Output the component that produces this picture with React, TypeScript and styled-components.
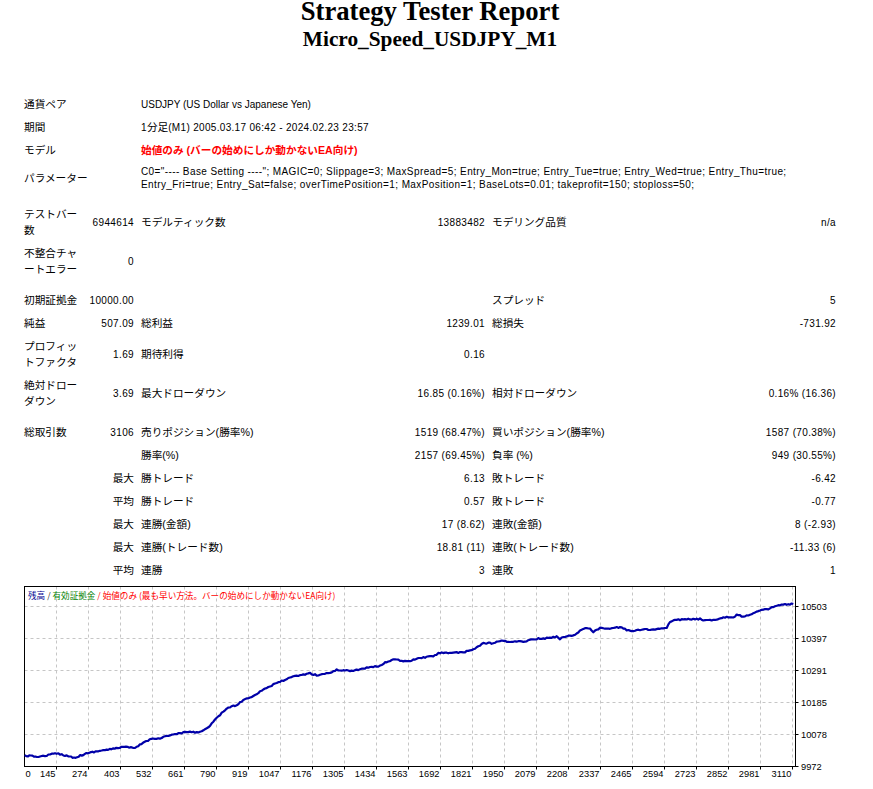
import React from "react";
import styled, { createGlobalStyle } from "styled-components";

const GlobalStyle = createGlobalStyle`
  html, body { margin: 0; padding: 0; background: #ffffff; }
  body { font-family: "Liberation Sans", "Noto Sans CJK JP", Arial, sans-serif; color: #000; }
`;

const Page = styled.div`
  width: 860px;
`;

const Title = styled.div`
  text-align: center;
  font-family: "Liberation Serif", "Times New Roman", serif;
  font-weight: 700;
  font-size: 26.67px;
  line-height: 22px;
`;

const SubTitle = styled.div`
  text-align: center;
  font-family: "Liberation Serif", "Times New Roman", serif;
  font-weight: 700;
  font-size: 21.33px;
  line-height: 34px;
  margin-bottom: 36px;
`;

const Report = styled.table`
  width: 820px;
  margin: 0 auto;
  table-layout: fixed;
  border-collapse: separate;
  border-spacing: 1px;
`;

const Cell = styled.td<{ $right?: boolean; $jp?: boolean; $red?: boolean; $ls?: number }>`
  padding: 3px;
  text-align: ${(p) => (p.$right ? "right" : "left")};
  vertical-align: middle;
  font-family: "Liberation Sans", "Noto Sans CJK JP", sans-serif;
  font-size: ${(p) => (p.$jp ? "10.67px" : "10px")};
  line-height: ${(p) => (p.$jp ? "16px" : "13px")};
  letter-spacing: ${(p) => (p.$ls !== undefined ? p.$ls : p.$right && !p.$jp ? 0.35 : 0)}px;
  font-weight: ${(p) => (p.$red ? 700 : 400)};
  color: ${(p) => (p.$red ? "#ff0000" : "#000000")};
  white-space: nowrap;
  overflow: hidden;
`;

const Jp = styled.span`
  font-family: "Noto Sans CJK JP", sans-serif;
  font-size: 10.67px;
  letter-spacing: 0;
`;

const SpacerRow = styled.tr`
  height: 7px;
  & > td { padding: 0; }
`;

const ChartBox = styled.div`
  width: 820px;
  height: 200px;
  margin: 1px auto 0;
  & > svg { display: block; }
`;

const KEY: [number, number][] = [
  [4.7, 172.7], [20, 173.7], [36.7, 170.3], [46.7, 172.7], [54, 174.7], [68, 170],
  [80, 167.7], [93, 166], [103, 163.7], [115, 165.3], [123, 159.7], [133, 155.3],
  [140, 155.3], [146.7, 153], [160, 150.3], [170, 148.7], [176.7, 149.7], [186.7, 145.7],
  [196.7, 135.3], [206.7, 125.3], [216.7, 122], [223.3, 117], [233.3, 113], [243.3, 106.3],
  [260, 98.7], [273.3, 93.7], [290, 90.3], [296.7, 92.3], [310, 89.7], [316.7, 87],
  [333.3, 87.7], [343.3, 85.3], [360, 83], [366.7, 78.7], [376.7, 76], [383.3, 78.7],
  [390, 78], [396.7, 75.7], [413.3, 73], [420, 69.7], [430, 69.7], [443.3, 69.7],
  [453.3, 66.3], [463.3, 60.3], [473.3, 60.3], [480, 58], [490, 58.7], [503.3, 58.7],
  [513.3, 56], [526.7, 55.3], [536.7, 53.7], [540, 55.7], [546.7, 53], [553.3, 52.3],
  [563.3, 45.7], [570, 45.3], [573.3, 48.7], [580, 45.3], [590, 45.7], [600, 44],
  [606.7, 47], [613.3, 47.7], [626.7, 46.3], [633.3, 46.7], [643.3, 45.3], [646.7, 45.3],
  [650, 38.7], [656.7, 36.7], [670, 36.3], [680, 36], [683.3, 37.7], [696.7, 36.3],
  [706.7, 33.7], [713.3, 34.3], [716.7, 31.7], [723.3, 33.7], [733.3, 30.3], [740, 27.7],
  [746.7, 26.3], [756.7, 23], [763.3, 21.7], [773.3, 21],
];

function buildPath(): string {
  let seed = 12345;
  const rnd = () => {
    seed = (seed * 16807) % 2147483647;
    return seed / 2147483647;
  };
  const pts: string[] = [];
  for (let i = 0; i < KEY.length - 1; i++) {
    const [x0, y0] = KEY[i];
    const [x1, y1] = KEY[i + 1];
    const n = Math.max(1, Math.round((x1 - x0) / 1.6));
    for (let j = 0; j < n; j++) {
      const t = j / n;
      const x = x0 + (x1 - x0) * t;
      const y = y0 + (y1 - y0) * t + (rnd() - 0.5) * 1.3;
      pts.push(`${x.toFixed(1)},${y.toFixed(1)}`);
    }
  }
  const last = KEY[KEY.length - 1];
  pts.push(`${last[0]},${last[1]}`);
  return "M" + pts.join(" L");
}

const X_LABELS = [
  "0", "145", "274", "403", "532", "661", "790", "919", "1047", "1176", "1305", "1434",
  "1563", "1692", "1821", "1950", "2079", "2208", "2337", "2465", "2594", "2723", "2852",
  "2981", "3110",
];
const Y_LABELS = ["9972", "10078", "10185", "10291", "10397", "10503"];

const FL = 4.5;
const FR = 775.5;
const FT = 3.5;
const FB = 183.5;
const XSTEP = 32;
const YSTEP = 32.2;

function Chart() {
  const path = buildPath();
  return (
    <svg width="820" height="200" viewBox="0 0 820 200" xmlns="http://www.w3.org/2000/svg">
      <rect x="0" y="0" width="820" height="200" fill="#ffffff" />
      {Array.from({ length: 24 }, (_, i) => {
        const x = FL + XSTEP * (i + 1);
        return (
          <g key={`vx${i}`}>
            <line x1={x} y1={FT} x2={x} y2={FB} stroke="#c6c6c6" strokeWidth="1" strokeDasharray="3 3" />
            <line x1={x} y1={FB} x2={x} y2={FB + 3} stroke="#000" strokeWidth="1" />
          </g>
        );
      })}
      {Array.from({ length: 5 }, (_, i) => {
        const y = Math.round(FB - YSTEP * (i + 1)) + 0.5;
        return (
          <line key={`hy${i}`} x1={FL} y1={y} x2={FR} y2={y} stroke="#c6c6c6" strokeWidth="1" strokeDasharray="3 3" />
        );
      })}
      <rect x={FL} y={FT} width={FR - FL} height={FB - FT} fill="none" stroke="#000" strokeWidth="1" />
      {Y_LABELS.map((l, i) => {
        const y = i === 0 ? FB : Math.round(FB - YSTEP * i) + 0.5;
        return (
          <g key={l}>
            <line x1={FR} y1={y} x2={FR + 3} y2={y} stroke="#000" strokeWidth="1" />
            <text
              x={781}
              y={y + 3.3}
              fontFamily="'Liberation Sans', Arial, sans-serif"
              fontSize="9.3"
              fill="#000"
            >
              {l}
            </text>
          </g>
        );
      })}
      {X_LABELS.map((l, i) => {
        const gx = FL + XSTEP * i;
        return i === 0 ? (
          <text key={l} x={5.5} y={193.5} fontFamily="'Liberation Sans', Arial, sans-serif" fontSize="9.3" fill="#000">
            {l}
          </text>
        ) : (
          <text
            key={l}
            x={gx - 1}
            y={193.5}
            textAnchor="end"
            fontFamily="'Liberation Sans', Arial, sans-serif"
            fontSize="9.3"
            fill="#000"
          >
            {l}
          </text>
        );
      })}
      <path d={path} fill="none" stroke="#0000a8" strokeWidth="2.2" strokeLinejoin="round" />
      <text x={8} y={15.8} fontFamily="'Noto Sans CJK JP', sans-serif" fontSize="8.6">
        <tspan fill="#000090">残高</tspan>
        <tspan fill="#303030"> / </tspan>
        <tspan fill="#008000">有効証拠金</tspan>
        <tspan fill="#ff0000"> / 始値のみ (最も早い方法。バーの始めにしか動かないEA向け)</tspan>
      </text>
    </svg>
  );
}

export default function App() {
  return (
    <>
      <GlobalStyle />
      <Page>
        <Title>Strategy Tester Report</Title>
        <SubTitle>Micro_Speed_USDJPY_M1</SubTitle>
        <Report>
          <colgroup>
            <col style={{ width: 60 }} />
            <col style={{ width: 55 }} />
            <col style={{ width: 200 }} />
            <col style={{ width: 149 }} />
            <col style={{ width: 200 }} />
            <col style={{ width: 149 }} />
          </colgroup>
          <tbody>
            <tr>
              <Cell $jp colSpan={2}>通貨ペア</Cell>
              <Cell colSpan={4}>USDJPY (US Dollar vs Japanese Yen)</Cell>
            </tr>
            <tr>
              <Cell $jp colSpan={2}>期間</Cell>
              <Cell colSpan={4} $ls={0.32}>
                1<Jp>分足</Jp>(M1) 2005.03.17 06:42 - 2024.02.23 23:57
              </Cell>
            </tr>
            <tr>
              <Cell $jp colSpan={2}>モデル</Cell>
              <Cell $jp $red colSpan={4}>始値のみ (バーの始めにしか動かないEA向け)</Cell>
            </tr>
            <tr>
              <Cell $jp colSpan={2}>パラメーター</Cell>
              <Cell colSpan={4} $ls={0.4}>
                C0="---- Base Setting ----"; MAGIC=0; Slippage=3; MaxSpread=5; Entry_Mon=true; Entry_Tue=true; Entry_Wed=true; Entry_Thu=true;
                <br />
                Entry_Fri=true; Entry_Sat=false; overTimePosition=1; MaxPosition=1; BaseLots=0.01; takeprofit=150; stoploss=50;
              </Cell>
            </tr>
            <SpacerRow><td colSpan={6} /></SpacerRow>
            <tr>
              <Cell $jp>テストバー<br />数</Cell>
              <Cell $right>6944614</Cell>
              <Cell $jp>モデルティック数</Cell>
              <Cell $right>13883482</Cell>
              <Cell $jp>モデリング品質</Cell>
              <Cell $right>n/a</Cell>
            </tr>
            <tr>
              <Cell $jp>不整合チャ<br />ートエラー</Cell>
              <Cell $right>0</Cell>
              <Cell />
              <Cell />
              <Cell />
              <Cell />
            </tr>
            <SpacerRow><td colSpan={6} /></SpacerRow>
            <tr>
              <Cell $jp>初期証拠金</Cell>
              <Cell $right>10000.00</Cell>
              <Cell />
              <Cell />
              <Cell $jp>スプレッド</Cell>
              <Cell $right>5</Cell>
            </tr>
            <tr>
              <Cell $jp>純益</Cell>
              <Cell $right>507.09</Cell>
              <Cell $jp>総利益</Cell>
              <Cell $right>1239.01</Cell>
              <Cell $jp>総損失</Cell>
              <Cell $right>-731.92</Cell>
            </tr>
            <tr>
              <Cell $jp>プロフィッ<br />トファクタ</Cell>
              <Cell $right>1.69</Cell>
              <Cell $jp>期待利得</Cell>
              <Cell $right>0.16</Cell>
              <Cell />
              <Cell />
            </tr>
            <tr>
              <Cell $jp>絶対ドロー<br />ダウン</Cell>
              <Cell $right>3.69</Cell>
              <Cell $jp>最大ドローダウン</Cell>
              <Cell $right>16.85 (0.16%)</Cell>
              <Cell $jp>相対ドローダウン</Cell>
              <Cell $right>0.16% (16.36)</Cell>
            </tr>
            <SpacerRow><td colSpan={6} /></SpacerRow>
            <tr>
              <Cell $jp>総取引数</Cell>
              <Cell $right>3106</Cell>
              <Cell $jp>売りポジション(勝率%)</Cell>
              <Cell $right>1519 (68.47%)</Cell>
              <Cell $jp>買いポジション(勝率%)</Cell>
              <Cell $right>1587 (70.38%)</Cell>
            </tr>
            <tr>
              <Cell $jp $right colSpan={2} />
              <Cell $jp>勝率(%)</Cell>
              <Cell $right>2157 (69.45%)</Cell>
              <Cell $jp>負率 (%)</Cell>
              <Cell $right>949 (30.55%)</Cell>
            </tr>
            <tr>
              <Cell $jp $right colSpan={2}>最大</Cell>
              <Cell $jp>勝トレード</Cell>
              <Cell $right>6.13</Cell>
              <Cell $jp>敗トレード</Cell>
              <Cell $right>-6.42</Cell>
            </tr>
            <tr>
              <Cell $jp $right colSpan={2}>平均</Cell>
              <Cell $jp>勝トレード</Cell>
              <Cell $right>0.57</Cell>
              <Cell $jp>敗トレード</Cell>
              <Cell $right>-0.77</Cell>
            </tr>
            <tr>
              <Cell $jp $right colSpan={2}>最大</Cell>
              <Cell $jp>連勝(金額)</Cell>
              <Cell $right>17 (8.62)</Cell>
              <Cell $jp>連敗(金額)</Cell>
              <Cell $right>8 (-2.93)</Cell>
            </tr>
            <tr>
              <Cell $jp $right colSpan={2}>最大</Cell>
              <Cell $jp>連勝(トレード数)</Cell>
              <Cell $right>18.81 (11)</Cell>
              <Cell $jp>連敗(トレード数)</Cell>
              <Cell $right>-11.33 (6)</Cell>
            </tr>
            <tr>
              <Cell $jp $right colSpan={2}>平均</Cell>
              <Cell $jp>連勝</Cell>
              <Cell $right>3</Cell>
              <Cell $jp>連敗</Cell>
              <Cell $right>1</Cell>
            </tr>
          </tbody>
        </Report>
        <ChartBox>
          <Chart />
        </ChartBox>
      </Page>
    </>
  );
}
